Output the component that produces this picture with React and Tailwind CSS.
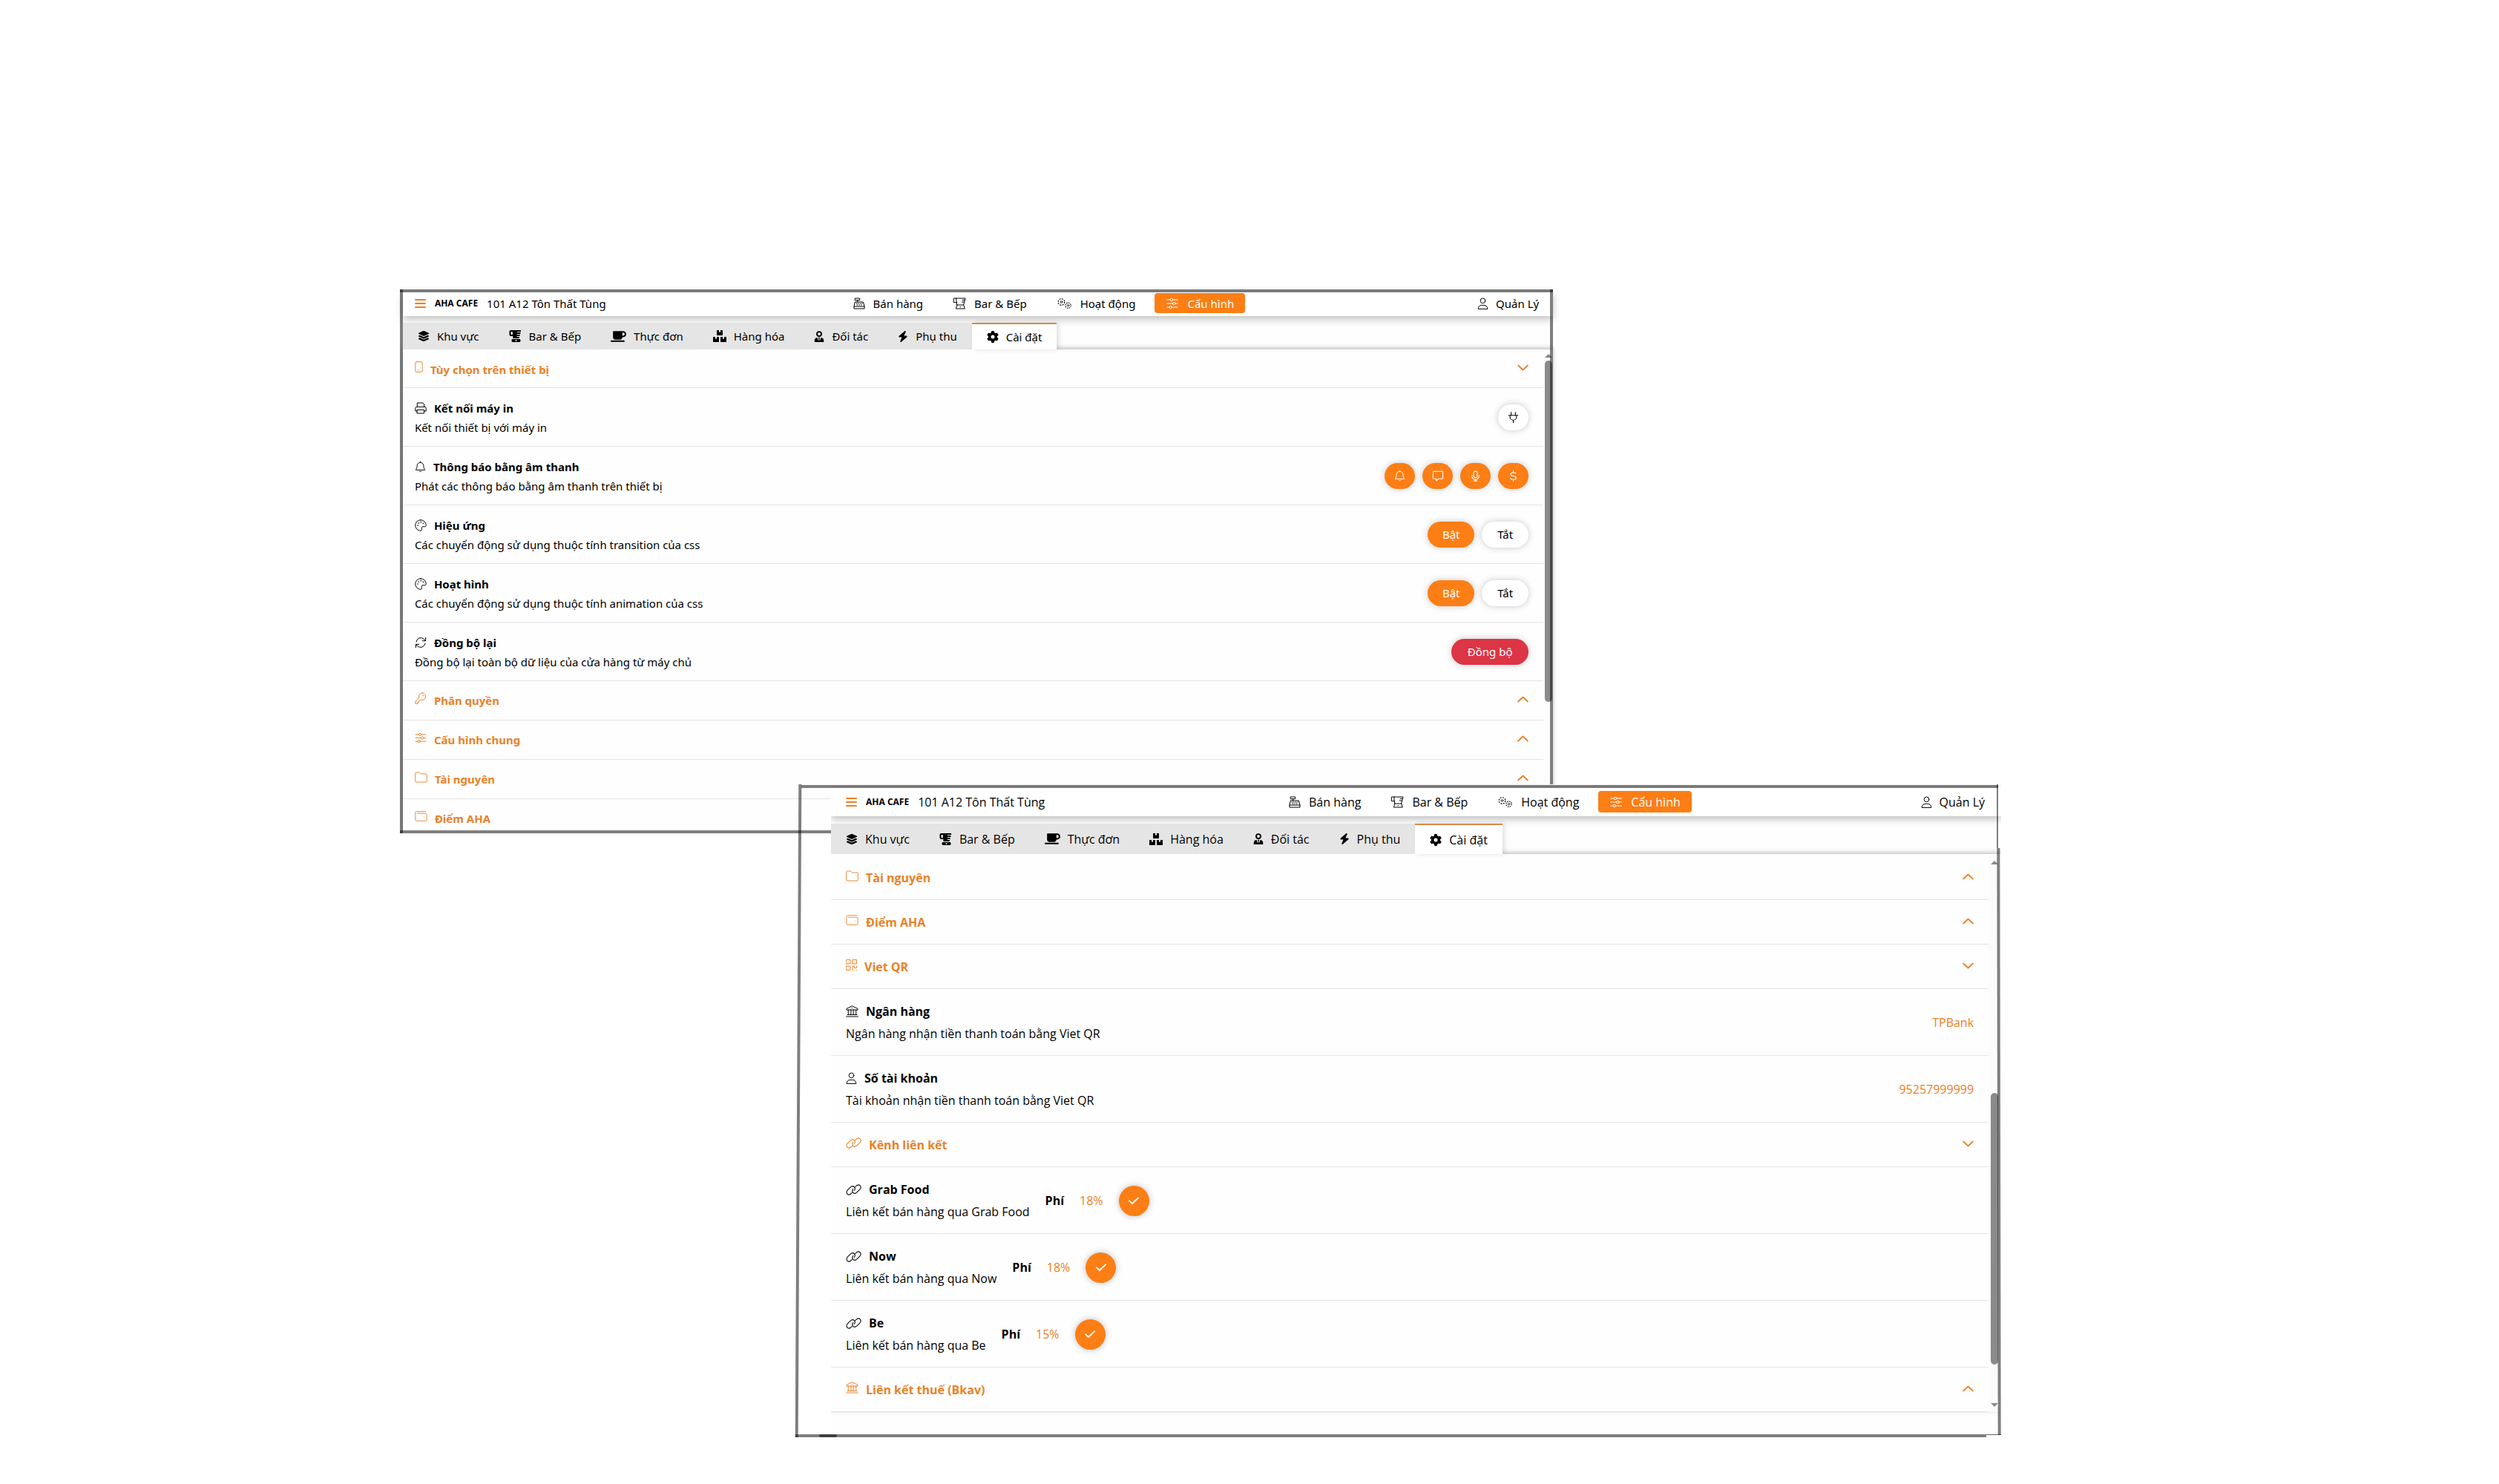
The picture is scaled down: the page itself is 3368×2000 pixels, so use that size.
import React from "react";
import { FaLayerGroup, FaBlender, FaMugSaucer, FaBolt, FaGear } from "react-icons/fa6";
import { FaBoxes } from "react-icons/fa";

function Line({ box = "0 0 24 24", className = "h-4 w-4", width = 1.5, children }) {
  return (
    <svg
      viewBox={box}
      className={className + " shrink-0"}
      fill="none"
      stroke="currentColor"
      strokeWidth={width}
      strokeLinecap="round"
      strokeLinejoin="round"
      aria-hidden="true"
    >
      {children}
    </svg>
  );
}

const Register = () => (
  <Line className="h-4 w-4">
    <path d="M4 1.500h9v4H4zM8.500 5.500V9M4 9h16l2.500 9v4.500h-21V18zM1.500 18h21" />
    <path d="M6.500 12h.1M10 12h.1M14 12h.1M17.500 12h.1M8 15h.1M12 15h.1M16 15h.1" strokeWidth="2" />
  </Line>
);
const BlenderLine = () => (
  <Line className="h-4 w-[18px]" box="0 0 26 24">
    <path d="M7 1.500h18l-3.500 13.500H8.500zM7 1.500H1.500V10H8M19 5h4.500M18 9h4.500M8.500 15 6 22.500h18L21.500 15M14.500 19h1" />
  </Line>
);
const GearsLine = () => (
  <Line className="h-4 w-[21px]" box="0 0 30 24" width={1.3}>
    <circle cx="9" cy="9" r="6.500" strokeDasharray="3 2.100" strokeWidth="1.700" strokeLinecap="butt" />
    <circle cx="9" cy="9" r="2" />
    <circle cx="22.500" cy="16" r="5.500" strokeDasharray="2.500 1.820" strokeWidth="1.700" strokeLinecap="butt" />
    <circle cx="22.500" cy="16" r="1.800" />
  </Line>
);
const Sliders = ({ className = "h-4 w-[18px]" }) => (
  <Line className={className}>
    <path d="M1 4.500h7M13 4.500h10M1 12h12M18 12h5M1 19.500h5M11 19.500h12" />
    <circle cx="10.500" cy="4.500" r="2.500" />
    <circle cx="15.500" cy="12" r="2.500" />
    <circle cx="8.500" cy="19.500" r="2.500" />
  </Line>
);
const SlidersThin = () => <Sliders className="h-[15px] w-4" />;
const UserLine = () => (
  <Line className="h-4 w-[15px]" box="0 0 22 24">
    <circle cx="11" cy="6.500" r="5" />
    <path d="M1.500 22.500c0-4 3-7 7-7h5c4 0 7 3 7 7z" />
  </Line>
);
const Partner = () => (
  <svg viewBox="0 0 22 24" className="h-[15px] w-[14px] shrink-0" aria-hidden="true">
    <circle cx="11" cy="6.500" r="4.800" fill="none" stroke="currentColor" strokeWidth="3" />
    <path d="M1 24v-3.500C1 17 4 14.500 7 14.500L9.500 22l.8-5L9 14h4l-1.300 3 .8 5 2.500-7.500c3 0 6 2.500 6 6V24z" fill="currentColor" />
  </svg>
);
const Phone = () => (
  <Line className="h-[15px] w-[11px]" box="0 0 17 24">
    <rect x="1" y="1" width="15" height="22" rx="2.500" />
    <path d="M8 19h1" />
  </Line>
);
const Printer = () => (
  <Line>
    <path d="M5 9.500V1.500h11.500L19 4v5.500M5 18H1.200v-5.500a3 3 0 0 1 3-3h15.600a3 3 0 0 1 3 3V18H19M5 15.500h14v7H5z" />
  </Line>
);
const Bell = ({ className = "h-4 w-[15px]" }) => (
  <Line className={className}>
    <path d="M12 1v2M12 3c-4.500 0-7 3.200-7 7 0 5-1.500 6.500-3 9h20c-1.500-2.500-3-4-3-9 0-3.800-2.500-7-7-7zM9.500 21.500c1 1.500 4 1.500 5 0" />
  </Line>
);
const Palette = () => (
  <Line>
    <path d="M12 1.200C6 1.200 1.200 6 1.200 12S6 22.800 12 22.800c2 0 2.800-1.800 2-3.400-1.200-2.400.2-4.700 2.500-4.700h3.800c1.600 0 2.500-1.200 2.500-2.700C22.800 6 18 1.200 12 1.200z" />
    <path d="M6 12h.1M8 7.500h.1M12.500 5.500h.1M17 8h.1" strokeWidth="2.400" />
  </Line>
);
const Sync = () => (
  <Line>
    <path d="M22 2v6.500h-6.500M2 22v-6.500h6.500M3 10.500C4 5.500 7.500 2.500 12 2.500c4 0 7 2 9.500 6M21 13.500c-1 5-4.500 8-9 8-4 0-7-2-9.500-6" />
  </Line>
);
const Key = () => (
  <Line>
    <path d="M15.500 1.200a7.300 7.300 0 0 0-6.800 9.800L1.200 18.500v4.300H6v-3h3v-3l2-2a7.300 7.300 0 1 0 4.500-13.600z" />
    <path d="M17 6.500h.1" strokeWidth="2.400" />
  </Line>
);
const Folder = () => (
  <Line className="h-[15px] w-[17px]" box="0 0 26 22" width={1.4}>
    <path d="M1 3a2 2 0 0 1 2-2h6.500l3.500 3h10a2 2 0 0 1 2 2v13a2 2 0 0 1-2 2H3a2 2 0 0 1-2-2z" />
  </Line>
);
const Wallet = () => (
  <Line className="h-[14px] w-[17px]" box="0 0 26 22" width={1.4}>
    <path d="M22.500 1H3.500A2.500 2.500 0 0 0 1 3.500v15A2.500 2.500 0 0 0 3.500 21h19a2.500 2.500 0 0 0 2.500-2.500V7.500A2.500 2.500 0 0 0 22.500 5H5M19 13h.1" />
  </Line>
);
const Qr = () => (
  <Line className="h-[15px] w-[15px]" width={1.6}>
    <path d="M1 1h8.500v8.500H1zM14.500 1H23v8.500h-8.500zM1 14.500h8.500V23H1zM5.200 5.200h.1M18.700 5.200h.1M5.200 18.700h.1M14.500 23v-8.500h4v4H23v-4M19 23h.1M23 23h.1" />
  </Line>
);
const Bank = () => (
  <Line className="h-4 w-[17px]" box="0 0 26 24">
    <path d="M1.500 8.500v-2L13 1l11.500 5.500v2zM5 8.500V19M10.500 8.500V19M15.500 8.500V19M21 8.500V19M3 19h20M1 22.800h24M12.500 5.200h1" />
  </Line>
);
const Chain = () => (
  <Line className="h-[15px] w-[21px]" box="0 0 30 21" width={1.500}>
    <path d="M12.500 15.500 10 18c-2.300 2.200-5.500 2.300-7.300.5s-1.700-5 .6-7.300l5.500-5.600c2.300-2.200 5.500-2.400 7.300-.6 2 2 1.700 5-.3 7.300" />
    <path d="M17.500 5.500 20 3c2.300-2.200 5.500-2.300 7.300-.5s1.700 5-.6 7.300l-5.500 5.600c-2.300 2.200-5.500 2.400-7.300.6-2-2-1.700-5 .3-7.300" />
  </Line>
);
const Plug = () => (
  <Line className="h-[15px] w-[15px]" width={1.7}>
    <path d="M7.500 1v6M16.500 1v6M2 7.500h20M5 7.500V11a7 7 0 0 0 14 0V7.500M12 18v5" />
  </Line>
);
const Chat = () => (
  <Line className="h-[15px] w-4" width={1.700}>
    <path d="M3 2h18a1.500 1.500 0 0 1 1.500 1.500v13A1.500 1.500 0 0 1 21 18h-8l-5 4v-4H3a1.500 1.500 0 0 1-1.500-1.500v-13A1.500 1.500 0 0 1 3 2z" />
  </Line>
);
const Mic = () => (
  <Line className="h-[15px] w-[15px]" width={1.800}>
    <rect x="8" y="1.500" width="8" height="14" rx="4" />
    <path d="M4.500 10.500v1.500a7.500 7.500 0 0 0 15 0v-1.500M12 19.500v3M8.500 22.500h7" />
  </Line>
);
const Dollar = () => (
  <Line className="h-[15px] w-[15px]" width={1.800}>
    <path d="M12 1v3.500M12 19.500V23M17.500 6.500C16.500 5 14.500 4.500 12 4.500c-3.500 0-5.500 1.500-5.500 3.700 0 5.300 11.500 2.300 11.500 7.600 0 2.200-2.500 3.700-6 3.700-2.800 0-5-.8-6-2.500" />
  </Line>
);
const Check = () => (
  <Line className="h-4 w-4" width={2.800}>
    <path d="M3 12.500 9 18 21 6.500" />
  </Line>
);
const Chevron = ({ open }) => (
  <Line className="h-[9px] w-[15px]" box="0 0 20 12" width={2.400}>
    {open ? <path d="m1.500 2 8.500 8 8.500-8" /> : <path d="m1.500 10 8.500-8 8.500 8" />}
  </Line>
);
const Menu = () => (
  <Line className="h-[14px] w-[15px]" box="0 0 15 14" width={2}>
    <path d="M1 2h13M1 7h13M1 12h13" />
  </Line>
);

const navItems = [
  { label: "Bán hàng", icon: Register },
  { label: "Bar & Bếp", icon: BlenderLine },
  { label: "Hoạt động", icon: GearsLine },
];

const tabs = [
  { label: "Khu vực", icon: <FaLayerGroup className="h-4 w-4" /> },
  { label: "Bar & Bếp", icon: <FaBlender className="h-4 w-[17px]" /> },
  { label: "Thực đơn", icon: <FaMugSaucer className="h-[17px] w-[21px]" /> },
  { label: "Hàng hóa", icon: <FaBoxes className="h-4 w-[18px]" /> },
  { label: "Đối tác", icon: <Partner /> },
  { label: "Phụ thu", icon: <FaBolt className="h-[15px] w-[14px]" /> },
];

function Header({ barClass, buttonClass }) {
  return (
    <header className={barClass + " flex items-center justify-between bg-white shadow-[0_4px_10px_rgba(0,0,0,0.25)]"}>
      <div className="flex items-center gap-3">
        <button type="button" aria-label="Menu" className="text-[#ee7f22]">
          <Menu />
        </button>
        <span className="text-xs font-bold">AHA CAFE</span>
        <span>101 A12 Tôn Thất Tùng</span>
      </div>
      <nav className="flex items-center">
        {navItems.map(({ label, icon: Icon }) => (
          <a key={label} href="#" className="flex items-center gap-[11px] px-5">
            <Icon />
            {label}
          </a>
        ))}
        <a href="#" className={buttonClass + " ml-1.5 flex items-center gap-[11px] rounded bg-[#fd7e14] px-[15px] text-white"}>
          <Sliders />
          Cấu hình
        </a>
      </nav>
      <a href="#" className="flex items-center gap-[10px]">
        <UserLine />
        Quản Lý
      </a>
    </header>
  );
}

function Tabs({ barClass, tabClass }) {
  return (
    <div className={barClass + " relative z-10 flex"} role="tablist">
      {tabs.map(({ label, icon }) => (
        <button key={label} type="button" role="tab" aria-selected="false" className={tabClass + " flex items-center gap-[10px] bg-[#e5e5e5]"}>
          {icon}
          {label}
        </button>
      ))}
      <button
        type="button"
        role="tab"
        aria-selected="true"
        className={tabClass + " flex items-center gap-[10px] border-t-2 border-[#d98a45] bg-white shadow-[3px_0_6px_rgba(0,0,0,0.12)]"}
      >
        <FaGear className="h-4 w-4" />
        Cài đặt
      </button>
    </div>
  );
}

function Section({ icon: Icon, title, open, rowClass }) {
  return (
    <button
      type="button"
      aria-expanded={!!open}
      className={rowClass + " flex w-full shrink-0 items-center justify-between border-b border-[#e4e4e4] pr-5 text-[#ea8128]"}
    >
      <span className="flex items-center gap-[10px]">
        <span className="pb-1.5">
          <Icon />
        </span>
        <span className="font-bold">{title}</span>
      </span>
      <span className="pb-1">
        <Chevron open={open} />
      </span>
    </button>
  );
}

function Item({ icon: Icon, title, text, rowClass, gapClass, between = true, children }) {
  return (
    <div className={rowClass + " flex shrink-0 items-center border-b border-[#e4e4e4] pr-5 " + (between ? "justify-between" : "gap-[21px]")}>
      <div className={gapClass + " flex flex-col"}>
        <h3 className="flex items-center gap-[10px] font-bold">
          <Icon />
          {title}
        </h3>
        <p>{text}</p>
      </div>
      {children}
    </div>
  );
}

const pill = "flex h-[35px] items-center justify-center rounded-full shadow-[0_0_10px_rgba(0,0,0,0.22)] ";

function Round({ label, tone, children }) {
  return (
    <button type="button" aria-label={label} className={pill + tone + " w-[41px]"}>
      {children}
    </button>
  );
}

function OnOff() {
  return (
    <div className="flex gap-[10px]">
      <button type="button" className={pill + "w-[63px] bg-[#fd7e14] text-white"}>
        Bật
      </button>
      <button type="button" className={pill + "w-[63px] bg-white"}>
        Tắt
      </button>
    </div>
  );
}

const orange = "bg-[#fd7e14] text-white";

function DeviceWindow() {
  const section = "h-[53px] pl-4";
  const item = "h-[79px] pl-4";
  const gap = "gap-[2px] pt-[2px]";
  return (
    <section className="relative mt-[390px] ml-[16%] w-[46.15%] bg-[#fefefe]">
      <div className="pt-[3px] pl-1">
        <Header barClass="h-[33px] pb-[2px] pl-4 pr-[19px]" buttonClass="h-[27px]" />
        <Tabs barClass="mt-[9px] h-9" tabClass="px-5" />
        <div className="flex h-[652px] overflow-hidden bg-[#fefefe] shadow-[0_-2px_6px_rgba(0,0,0,0.25)]">
          <div className="flex min-w-0 flex-1 flex-col">
            <Section icon={Phone} title="Tùy chọn trên thiết bị" open rowClass="h-[52px] pt-[2px] pl-4" />
            <Item icon={Printer} title="Kết nối máy in" text="Kết nối thiết bị với máy in" rowClass={item} gapClass={gap}>
              <Round label="Kết nối" tone="bg-white">
                <Plug />
              </Round>
            </Item>
            <Item icon={Bell} title="Thông báo bằng âm thanh" text="Phát các thông báo bằng âm thanh trên thiết bị" rowClass={item} gapClass={gap}>
              <div className="flex gap-[10px]">
                <Round label="Chuông" tone={orange}>
                  <Bell />
                </Round>
                <Round label="Tin nhắn" tone={orange}>
                  <Chat />
                </Round>
                <Round label="Giọng nói" tone={orange}>
                  <Mic />
                </Round>
                <Round label="Thanh toán" tone={orange}>
                  <Dollar />
                </Round>
              </div>
            </Item>
            <Item icon={Palette} title="Hiệu ứng" text="Các chuyển động sử dụng thuộc tính transition của css" rowClass={item} gapClass={gap}>
              <OnOff />
            </Item>
            <Item icon={Palette} title="Hoạt hình" text="Các chuyển động sử dụng thuộc tính animation của css" rowClass={item} gapClass={gap}>
              <OnOff />
            </Item>
            <Item icon={Sync} title="Đồng bộ lại" text="Đồng bộ lại toàn bộ dữ liệu của cửa hàng từ máy chủ" rowClass={item} gapClass={gap}>
              <button type="button" className={pill + "w-[104px] bg-[#dc3545] text-white"}>
                Đồng bộ
              </button>
            </Item>
            <Section icon={Key} title="Phân quyền" rowClass={section} />
            <Section icon={SlidersThin} title="Cấu hình chung" rowClass={section} />
            <Section icon={Folder} title="Tài nguyên" rowClass={section} />
            <Section icon={Wallet} title="Điểm AHA" rowClass={section} />
          </div>
          <div className="flex w-[13px] flex-col items-end gap-1 bg-[#fcfcfc] pt-1.5 pr-px">
            <span className="border-x-[5px] border-b-[5px] border-x-transparent border-b-[#8a8a8a]" />
            <span className="h-[460px] w-[10px] rounded-full bg-[#8a8a8a]" />
          </div>
        </div>
      </div>
      <span className="absolute inset-x-0 top-0 h-[4px] bg-black/50" />
      <span className="absolute inset-y-0 left-0 w-[4px] bg-black/50" />
      <span className="absolute inset-y-0 right-0 w-[4px] bg-black/50" />
      <span className="absolute inset-x-0 bottom-0 h-[4px] bg-black/50" />
    </section>
  );
}

function BankWindow() {
  const section = "h-[60px] pt-px pl-5";
  const item = "h-[90px] pt-px pl-5";
  const gap = "gap-[6px]";
  const channels = [
    { name: "Grab Food", fee: "18%" },
    { name: "Now", fee: "18%" },
    { name: "Be", fee: "15%" },
  ];
  return (
    <section className="relative z-20 -mt-[66px] ml-[31.83%] w-[48.25%] pl-12 font-['Open_Sans','Noto_Sans',sans-serif] text-base">
      <div className="overflow-hidden bg-[#fefefe] pt-1 pb-[34px]">
        <Header barClass="h-[39px] pl-5 pr-[22px]" buttonClass="h-[29px]" />
        <Tabs barClass="mt-[10px] h-[41px]" tabClass="px-5" />
        <div className="flex bg-[#fefefe] pt-[2px] shadow-[0_-2px_6px_rgba(0,0,0,0.25)]">
          <div className="flex min-w-0 flex-1 flex-col">
            <Section icon={Folder} title="Tài nguyên" rowClass={section} />
            <Section icon={Wallet} title="Điểm AHA" rowClass={section} />
            <Section icon={Qr} title="Viet QR" open rowClass={section} />
            <Item icon={Bank} title="Ngân hàng" text="Ngân hàng nhận tiền thanh toán bằng Viet QR" rowClass={item} gapClass={gap}>
              <span className="text-[#ea8128]">TPBank</span>
            </Item>
            <Item icon={UserLine} title="Số tài khoản" text="Tài khoản nhận tiền thanh toán bằng Viet QR" rowClass={item} gapClass={gap}>
              <span className="text-[#ea8128]">95257999999</span>
            </Item>
            <Section icon={Chain} title="Kênh liên kết" open rowClass={section} />
            {channels.map(({ name, fee }) => (
              <Item key={name} icon={Chain} title={name} text={"Liên kết bán hàng qua " + name} rowClass={item} gapClass={gap} between={false}>
                <span className="font-bold">Phí</span>
                <span className="text-[#ea8128]">{fee}</span>
                <button
                  type="button"
                  aria-label={"Bật " + name}
                  className="flex h-[41px] w-[41px] items-center justify-center rounded-full bg-[#fd7e14] text-white shadow-[0_0_10px_rgba(0,0,0,0.25)]"
                >
                  <Check />
                </button>
              </Item>
            ))}
            <Section icon={Bank} title="Liên kết thuế (Bkav)" rowClass={section} />
          </div>
          <div className="mr-1 flex w-[13px] flex-col items-end bg-[#fbfbfb] py-[7px]">
            <span className="border-x-[5px] border-b-[5px] border-x-transparent border-b-[#8a8a8a]" />
            <span className="mt-[308px] h-[366px] w-[10px] rounded-full bg-[#8a8a8a]" />
            <span className="mt-auto border-x-[5px] border-t-[5px] border-x-transparent border-t-[#8a8a8a]" />
          </div>
        </div>
      </div>
      <span className="absolute top-px right-1 left-2 h-[4px] bg-black/50" />
      <span className="absolute top-0 bottom-0 left-[2px] w-[4px] skew-x-[-0.3deg] bg-black/50" />
      <span className="absolute top-0 right-1 h-[86px] w-[2px] bg-black/50" />
      <span className="absolute top-[86px] right-px bottom-[3px] w-[4px] skew-x-[0.1deg] bg-black/50" />
      <span className="absolute right-5 bottom-0 left-0 h-[4px] bg-black/50" />
      <span className="absolute right-0 bottom-[3px] h-px w-5 bg-black/60" />
      <span className="absolute bottom-0 left-8 h-[4px] w-6 rounded-full bg-black/50" />
    </section>
  );
}

export default function App() {
  return (
    <main className="flow-root min-h-screen bg-white font-['Noto_Sans','Open_Sans',sans-serif] text-[15px] leading-6 text-black">
      <DeviceWindow />
      <BankWindow />
    </main>
  );
}
